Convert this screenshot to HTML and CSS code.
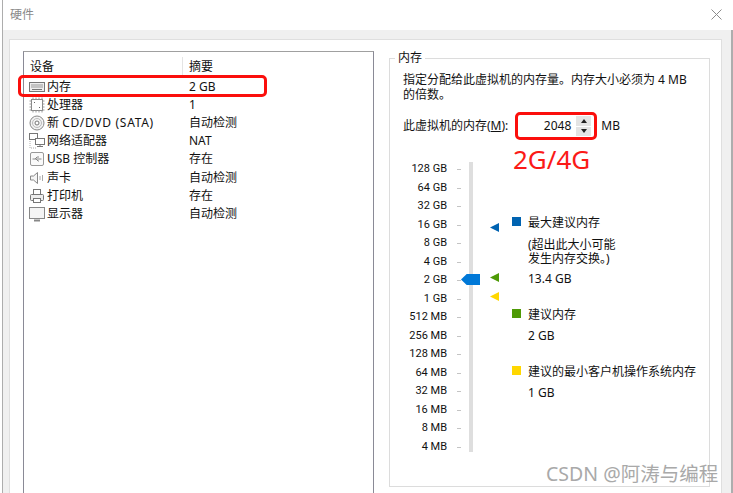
FILE: index.html
```html
<!DOCTYPE html>
<html lang="zh-CN">
<head>
<meta charset="utf-8">
<title>硬件</title>
<link rel="stylesheet" href="styles.css">
</head>
<body>
<div class="window">
  <header class="titlebar">
    <span class="title">硬件</span>
    <svg class="close" width="11" height="11" viewBox="0 0 11 11"><path d="M.5.5l10 10M10.500.5l-10 10" stroke="#8c8c8c" fill="none"/></svg>
  </header>
  <div class="body">
    <div class="panel">
      <section class="devices">
        <div class="dev-head"><span class="col-a">设备</span><span class="col-b">摘要</span></div>
        <div class="dev-row">
          <span class="col-a"><svg class="ico" width="16" height="14" viewBox="0 0 16 14"><rect x=".5" y="2.500" width="15" height="9" fill="#eee" stroke="#777"/><path d="M2 5h12M2 7h12" stroke="#999"/><path d="M3 9.500h10" stroke="#777"/></svg>内存</span><span class="col-b">2 GB</span>
        </div>
        <div class="dev-row">
          <span class="col-a"><svg class="ico" width="16" height="16" viewBox="0 0 16 16"><rect x="2.500" y="2.500" width="11" height="11" fill="#fff" stroke="#888"/><path d="M4 .5v2M7 .5v2M10 .5v2M13 .5v2M4 13.500v2M7 13.500v2M10 13.500v2M13 13.500v2M.5 4h2M.5 7h2M.5 10h2M.5 13h2M13.500 4h2M13.500 7h2M13.500 10h2M13.500 13h2" stroke="#999"/><path d="M5 5h1v1H5zM10 10h1v1h-1z" fill="#666"/></svg>处理器</span><span class="col-b">1</span>
        </div>
        <div class="dev-row">
          <span class="col-a"><svg class="ico" width="16" height="16" viewBox="0 0 16 16"><circle cx="8" cy="8" r="7" fill="#f2f2f2" stroke="#888"/><circle cx="8" cy="8" r="4.500" fill="none" stroke="#bbb"/><circle cx="8" cy="8" r="2" fill="#fff" stroke="#777"/></svg>新 <span class="wide">CD/DVD (SATA)</span></span><span class="col-b">自动检测</span>
        </div>
        <div class="dev-row">
          <span class="col-a"><svg class="ico" width="16" height="16" viewBox="0 0 16 16"><rect x=".5" y=".5" width="8" height="6" fill="#fff" stroke="#777"/><rect x="6.500" y="5.500" width="9" height="6" fill="#fff" stroke="#777"/><path d="M11 11.500v2M8 13.500h6" stroke="#777"/><path d="M1 8v7h6" stroke="#aaa" stroke-dasharray="1 1" fill="none"/></svg>网络适配器</span><span class="col-b">NAT</span>
        </div>
        <div class="dev-row">
          <span class="col-a"><svg class="ico" width="16" height="16" viewBox="0 0 16 16"><rect x="1.500" y="1.500" width="13" height="13" rx="1.500" fill="#fafafa" stroke="#999"/><path d="M3.500 8h9M6 8l2-2h2M7 8l2 2h1" stroke="#888" fill="none"/></svg>USB 控制器</span><span class="col-b">存在</span>
        </div>
        <div class="dev-row">
          <span class="col-a"><svg class="ico" width="16" height="16" viewBox="0 0 16 16"><path d="M1.500 6h3l4-3.500v11l-4-3.500h-3z" fill="#f5f5f5" stroke="#888"/><path d="M11 6v4M13.500 5v6" stroke="#aaa" fill="none"/></svg>声卡</span><span class="col-b">自动检测</span>
        </div>
        <div class="dev-row">
          <span class="col-a"><svg class="ico" width="16" height="16" viewBox="0 0 16 16"><rect x="4.500" y="1.500" width="7" height="5" fill="#fff" stroke="#777"/><rect x="1.500" y="6.500" width="13" height="6" rx="1" fill="#eee" stroke="#777"/><rect x="4.500" y="10.500" width="7" height="4" fill="#fff" stroke="#777"/></svg>打印机</span><span class="col-b">存在</span>
        </div>
        <div class="dev-row">
          <span class="col-a"><svg class="ico" width="16" height="16" viewBox="0 0 16 16"><rect x=".5" y="1.500" width="15" height="11" fill="#f4f4f4" stroke="#888"/><path d="M5 14.500h6" stroke="#888" stroke-width="2"/></svg>显示器</span><span class="col-b">自动检测</span>
        </div>
      </section>
      <fieldset class="memory">
        <legend>内存</legend>
        <p class="desc">指定分配给此虚拟机的内存量。内存大小必须为 4 MB<br>的倍数。</p>
        <div class="amount">
          <span>此虚拟机的内存(<u>M</u>):</span>
          <div class="spin">
            <span class="spin-val">2048</span>
            <span class="spin-btns">
              <span class="spin-btn"><i class="up"></i></span>
              <span class="spin-btn"><i class="down"></i></span>
            </span>
          </div>
          <span>MB</span>
        </div>
        <div class="scale-area">
          <div class="labels">
            <span>128 GB</span><span>64 GB</span><span>32 GB</span><span>16 GB</span><span>8 GB</span><span>4 GB</span><span>2 GB</span><span>1 GB</span><span>512 MB</span><span>256 MB</span><span>128 MB</span><span>64 MB</span><span>32 MB</span><span>16 MB</span><span>8 MB</span><span>4 MB</span>
          </div>
          <div class="track"></div>
          <span class="thumb"></span>
          <span class="mark mark-blue"></span>
          <span class="mark mark-green"></span>
          <span class="mark mark-yellow"></span>
          <div class="leg leg-max">
            <div class="leg-title"><i class="sw sw-blue"></i>最大建议内存</div>
            <p class="leg-note">(超出此大小可能<br>发生内存交换。)</p>
            <p class="leg-val">13.4 GB</p>
          </div>
          <div class="leg leg-rec">
            <div class="leg-title"><i class="sw sw-green"></i>建议内存</div>
            <p class="leg-val">2 GB</p>
          </div>
          <div class="leg leg-min">
            <div class="leg-title"><i class="sw sw-yellow"></i>建议的最小客户机操作系统内存</div>
            <p class="leg-val">1 GB</p>
          </div>
        </div>
      </fieldset>
    </div>
  </div>
</div>
<div class="hl hl-row"></div>
<div class="hl hl-spin"></div>
<div class="note">2G/4G</div>
<div class="watermark">CSDN @阿涛与编程</div>
</body>
</html>
```
FILE: styles.css
```css
* { box-sizing: border-box; }
html, body { margin: 0; height: 493px; overflow: hidden; background: #fff; }
body {
  position: relative;
  font: 12px/16px "Noto Sans", "Noto Sans CJK SC", sans-serif;
  color: #111;
}
p { margin: 0; }
.window {
  height: 493px;
  margin-left: 2px;
  border-left: 1px solid #adadad;
  display: flex;
  flex-direction: column;
}
.titlebar {
  height: 30px;
  flex: none;
  display: flex;
  align-items: center;
  justify-content: space-between;
  padding: 0 11px 1px 7px;
  background: #fff;
}
.title { font-size: 12px; color: #8a8a8a; }
.body {
  flex: 1;
  background: #f0f0f0;
  padding: 9px 9px 0 6px;
  border-right: 2px solid #adadad;
  min-height: 0;
}
.panel {
  height: 100%;
  background: #fff;
  border: solid #dfdfdf;
  border-width: 1px 1px 0;
  padding: 11px 11px 0 13px;
  display: flex;
  gap: 15px;
}
.devices {
  width: 351px;
  flex: none;
  border: solid #8a8a96;
  border-width: 1px 1px 0;
  border-top-color: #a0a0a0;
  padding-top: 5px;
}
.dev-head, .dev-row {
  display: flex;
  align-items: center;
  height: 18.1px;
}
.dev-head { height: 20px; margin-bottom: 1px; }
.col-a { width: 158px; padding-left: 6px; display: flex; align-items: center; white-space: pre; }
.dev-head .col-a { height: 20px; border-right: 1px solid #e4e4e4; width: 159px; }
.dev-head .col-b { padding-left: 6px; }
.col-b { padding-left: 7px; }
.dev-row .col-a { padding-left: 5px; }
.ico { flex: none; margin-right: 2px; width: 16px; }
.wide { letter-spacing: .7px; }
.memory {
  width: 321px;
  flex: none;
  margin: -1px 0 0;
  height: 437px;
  padding: 6px 8px 0 13px;
  border: 1px solid #dcdcdc;
  min-width: 0;
}
.memory legend { padding: 0 3px; margin-left: -8px; line-height: 16px; }
.desc { line-height: 15px; }
.amount {
  display: flex;
  align-items: center;
  margin-top: 13px;
  height: 22px;
}
.spin {
  margin: 0 10px 0 11px;
  width: 72px;
  height: 20px;
  display: flex;
  background: #fff;
  align-items: center;
  justify-content: flex-end;
}
.spin-val { padding-right: 5px; }
.spin-btns { display: flex; flex-direction: column; gap: 1px; width: 15px; height: 20px; }
.spin-btn { flex: 1; background: #e4e4e4; display: flex; align-items: center; justify-content: center; }
.spin-btn i { width: 0; height: 0; border: 3px solid transparent; }
.up { border-top-width: 0 !important; border-bottom: 4px solid #222 !important; }
.down { border-bottom-width: 0 !important; border-top: 4px solid #222 !important; }
.scale-area {
  position: relative;
  height: 320px;
}
.labels {
  position: absolute;
  left: -14px;
  top: 23px;
  width: 58px;
  display: grid;
  grid-auto-rows: 18.53px;
  font: 11px/18px Roboto, sans-serif;
}
.labels span { display: flex; align-items: center; justify-content: flex-end; position: relative; white-space: nowrap; }
.labels span::after {
  content: "";
  position: absolute;
  right: -14px;
  top: 9px;
  width: 4px;
  height: 1px;
  background: #c4c4c4;
}
.track {
  position: absolute;
  left: 66px;
  top: 25px;
  width: 4px;
  height: 290px;
  background: #dedede;
}
.thumb {
  position: absolute;
  left: 58px;
  top: 137px;
  width: 19px;
  height: 11px;
  background: #0078d7;
  clip-path: polygon(30% 0, 100% 0, 100% 100%, 30% 100%, 0 50%);
}
.mark {
  position: absolute;
  left: 87px;
  width: 9px;
  height: 9px;
  clip-path: polygon(100% 0, 100% 100%, 0 50%);
}
.mark-blue { top: 86px; background: #0063b1; }
.mark-green { top: 136px; background: #4e9a06; }
.mark-yellow { top: 155px; background: #ffd700; }
.leg { position: absolute; left: 125px; width: 190px; }
.leg-max { top: 78px; }
.leg-rec { top: 170px; }
.leg-min { top: 227px; }
.leg-title { display: flex; align-items: center; height: 16px; white-space: nowrap; }
.sw { width: 9px; height: 9px; margin: -3px 7px 0 -16px; flex: none; }
.sw-blue { background: #0063b1; }
.sw-green { background: #4e9a06; }
.sw-yellow { background: #ffd700; }
.leg-note { margin-top: 7px; line-height: 14px; }
.leg-val { margin-top: 5px; }
.hl {
  position: absolute;
  border: 3px solid #fb0f0c;
  border-radius: 5px;
}
.hl-row { left: 18px; top: 75px; width: 249px; height: 22px; }
.hl-spin { left: 515px; top: 112px; width: 82px; height: 28px; }
.note {
  position: absolute;
  left: 513px;
  top: 143px;
  font: 26px/32px "Noto Sans", sans-serif;
  color: #fb1a17;
}
.watermark {
  position: absolute;
  left: 546px;
  top: 462px;
  font: 19.5px/24px "Noto Sans", "Noto Sans CJK SC", sans-serif;
  color: #a9a9a9;
  white-space: nowrap;
}
```
